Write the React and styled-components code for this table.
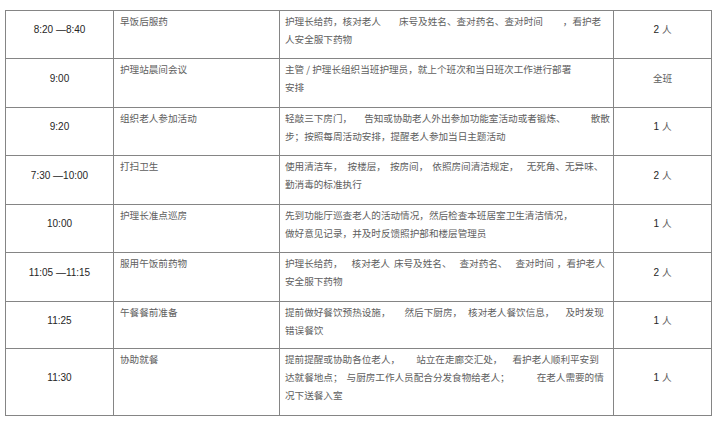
import React from 'react';
import styled, {createGlobalStyle} from 'styled-components';

const GlobalStyle = createGlobalStyle`
  html, body {
    margin: 0;
    padding: 0;
    background: #ffffff;
  }
  body {
    font-family: "Noto Sans CJK SC", "Noto Sans", sans-serif;
  }
`;

const Page = styled.div`
  padding: 10px 0 0 5px;
  width: 720px;
  height: 421px;
  box-sizing: border-box;
  overflow: hidden;
`;

const Schedule = styled.table`
  width: 706px;
  border-collapse: collapse;
  table-layout: fixed;
  border: 1px solid #858585;
`;

const Row = styled.tr`
  height: ${props => props.$h}px;
`;

const Cell = styled.td`
  border: 1px solid #858585;
  padding: 0;
  box-sizing: border-box;
  color: #5e5e5e;
  font-size: 9.6px;
  line-height: 18px;
`;

const CenterCell = styled(Cell)`
  text-align: center;
  vertical-align: middle;
  padding-bottom: 10px;
`;

const TextCell = styled(Cell)`
  vertical-align: top;
  padding: 1px 0 0 ${props => props.$pad}px;
`;

const Num = styled.span`
  font-family: "Liberation Sans", Arial, sans-serif;
  font-size: 10px;
  color: #262626;
`;

const Line = styled.span`
  display: block;
  white-space: nowrap;
`;

const Gap = styled.span`
  display: inline-block;
  width: ${props => props.$w}px;
`;

const rows = [
  {
    h: 48, time: '8:20 —8:40', task: '早饭后服药',
    desc: [['护理长给药，核对老人', 18, '床号及姓名、查对药名、查对时间', 20, '，看护老'], ['人安全服下药物']],
    count: ['2', '人'],
  },
  {
    h: 49, time: '9:00', task: '护理站晨间会议',
    desc: [['主管 / 护理长组织当班护理员，就上个班次和当日班次工作进行部署'], ['安排']],
    count: [null, '全班'],
  },
  {
    h: 48, time: '9:20', task: '组织老人参加活动',
    desc: [['轻敲三下房门，', 12, '告知或协助老人外出参加功能室活动或者锻炼、', 25, '散散'], ['步；按照每周活动安排，提醒老人参加当日主题活动']],
    count: ['1', '人'],
  },
  {
    h: 49, time: '7:30 —10:00', task: '打扫卫生',
    desc: [['使用清洁车，', 5, '按楼层，', 4, '按房间，', 4, '依照房间清洁规定，', 8, '无死角、无异味、'], ['勤消毒的标准执行']],
    count: ['2', '人'],
  },
  {
    h: 48, time: '10:00', task: '护理长准点巡房',
    desc: [['先到功能厅巡查老人的活动情况，然后检查本班居室卫生清洁情况，'], ['做好意见记录，并及时反馈照护部和楼层管理员']],
    count: ['1', '人'],
  },
  {
    h: 49, time: '11:05 —11:15', task: '服用午饭前药物',
    desc: [['护理长给药，', 9, '核对老人', 4, '床号及姓名、', 8, '查对药名、', 8, '查对时间', 3, '，看护老人'], ['安全服下药物']],
    count: ['2', '人'],
  },
  {
    h: 47, time: '11:25', task: '午餐餐前准备',
    desc: [['提前做好餐饮预热设施，', 14, '然后下厨房，', 6, '核对老人餐饮信息，', 11, '及时发现'], ['错误餐饮']],
    count: ['1', '人'],
  },
  {
    h: 67, time: '11:30', task: '协助就餐',
    desc: [
      ['提前提醒或协助各位老人，', 16, '站立在走廊交汇处，', 10, '看护老人顺利平安到'],
      ['达就餐地点；', 4, '与厨房工作人员配合分发食物给老人；', 27, '在老人需要的情'],
      ['况下送餐入室'],
    ],
    count: ['1', '人'],
  },
];

function renderLine(parts, key) {
  return (
    <Line key={key}>
      {parts.map((p, i) => typeof p === 'number' ? <Gap key={i} $w={p}/> : <span key={i}>{p}</span>)}
    </Line>
  );
}

export default function App() {
  return (
    <>
      <GlobalStyle/>
      <Page>
        <Schedule>
          <colgroup>
            <col style={{width: 108}}/>
            <col style={{width: 166}}/>
            <col style={{width: 334}}/>
            <col style={{width: 98}}/>
          </colgroup>
          <tbody>
          {rows.map((r, i) => (
            <Row key={i} $h={r.h}>
              <CenterCell><Num>{r.time}</Num></CenterCell>
              <TextCell $pad={6}>{r.task}</TextCell>
              <TextCell $pad={5}>{r.desc.map((l, j) => renderLine(l, j))}</TextCell>
              <CenterCell>
                {r.count[0] && <Num>{r.count[0]} </Num>}
                {r.count[1]}
              </CenterCell>
            </Row>
          ))}
          </tbody>
        </Schedule>
      </Page>
    </>
  );
}
